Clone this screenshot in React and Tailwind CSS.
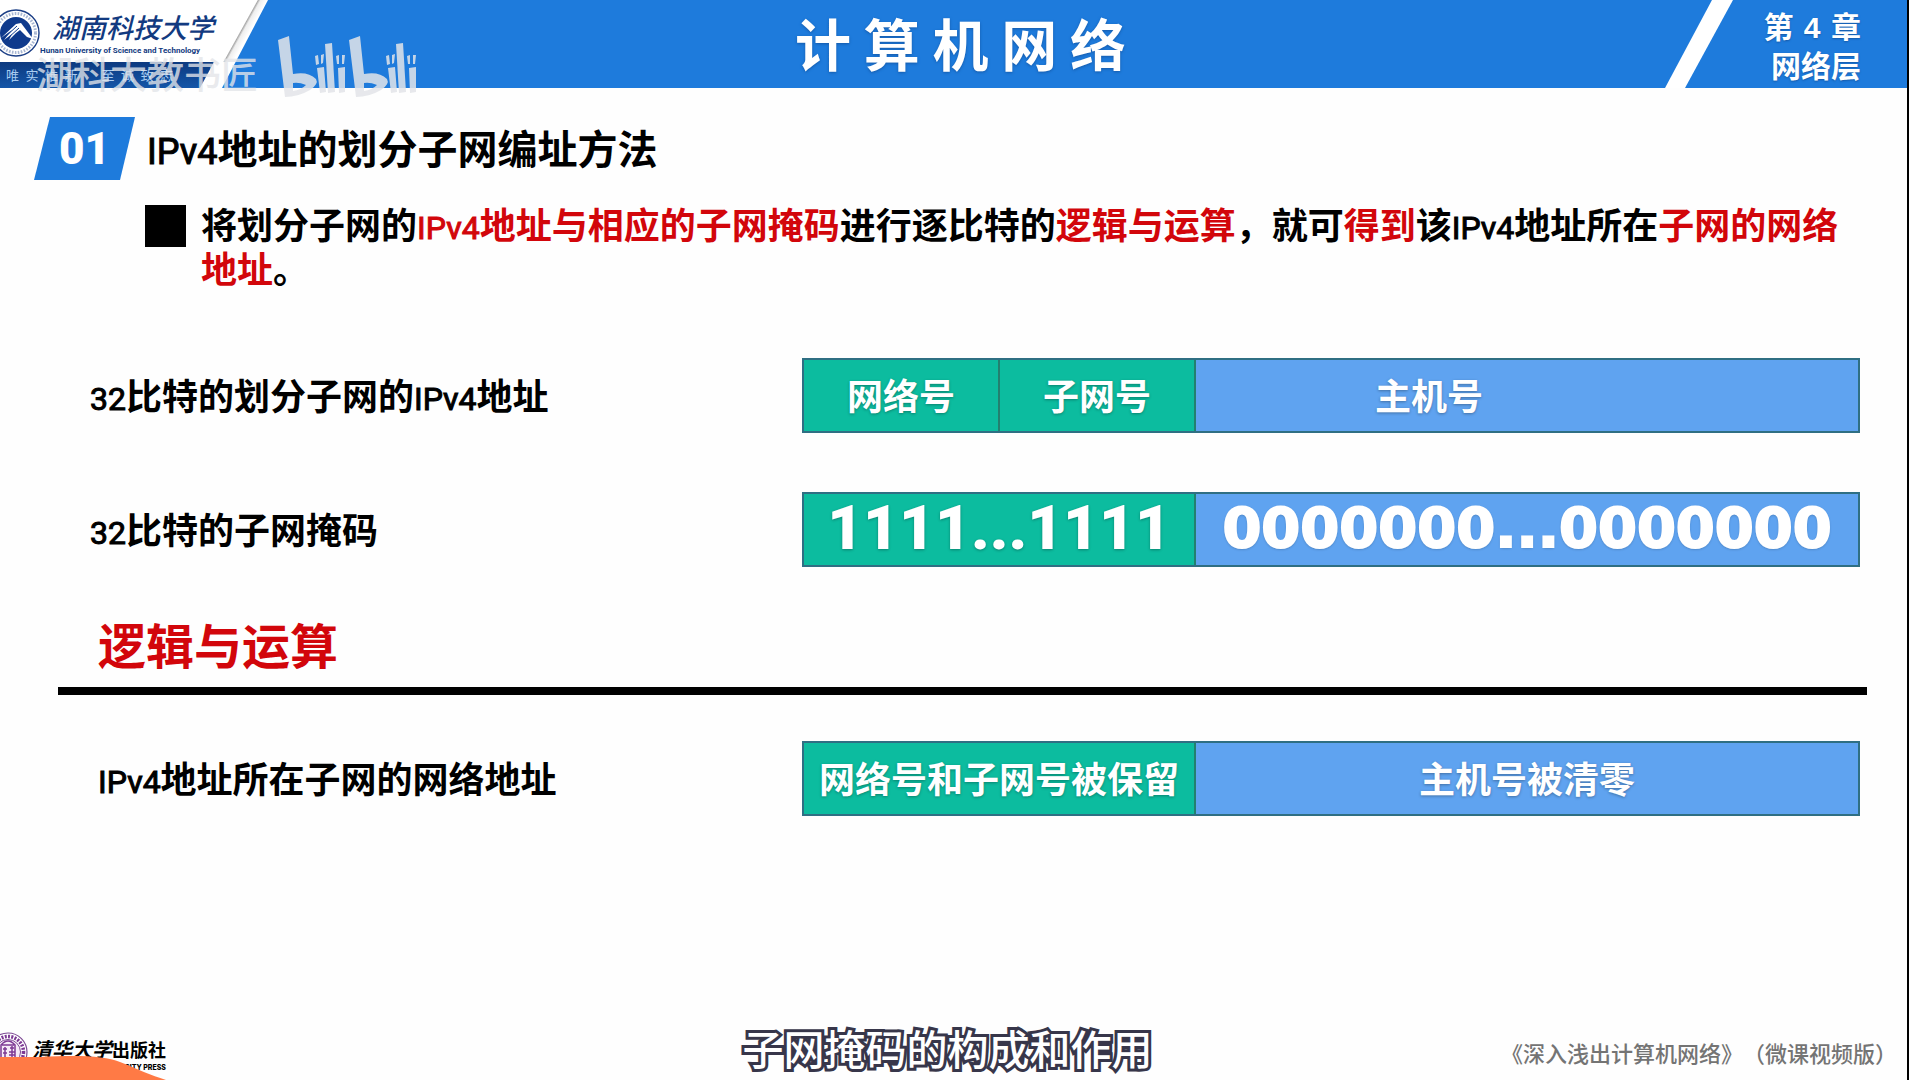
function UniversityEmblem() {
  return (
    <svg viewBox="0 0 48 48" className="-ml-2 h-12 w-12 shrink-0" aria-hidden="true">
      <circle cx="24" cy="24" r="23" fill="#fff" stroke="#1c3f86" strokeWidth="1.4" />
      <circle cx="24" cy="24" r="19.5" fill="none" stroke="#3f5f9d" strokeWidth="3" strokeDasharray="1.6 1.4" opacity=".45" />
      <circle cx="24" cy="24" r="16" fill="#0f3a8c" />
      <path d="M9 29 L24 15 L29 14 L41 30 L35 28 L28 21 L24 24 L17 31 L20 25 L12 31 L20 21 Z" fill="#fff" />
      <path d="M12 29 L25 17 M16 29 L27 19" stroke="#0f3a8c" strokeWidth="1" />
    </svg>
  );
}

function PressEmblem() {
  return (
    <svg viewBox="0 0 40 40" className="-ml-3 h-10 w-10 shrink-0" aria-hidden="true">
      <circle cx="20" cy="20" r="19" fill="#fff" stroke="#7d4a94" strokeWidth="1.2" />
      <circle cx="20" cy="20" r="15.5" fill="none" stroke="#7d3a94" strokeWidth="3.6" strokeDasharray="2 1.3" />
      <circle cx="20" cy="20" r="12.5" fill="#f5eaf7" stroke="#7d4a94" strokeWidth="1" />
      <path d="M13 28 V13 Q20 5 27 13 V28 M14 13 H26 M15 17 H19 M17 15 V25 M15 21 H19 M22 16 H26 M24 14 V26 M21 20 H27 M21 23 H27" fill="none" stroke="#7d3a94" strokeWidth="1.5" />
    </svg>
  );
}

function BilibiliLogo() {
  const half = (
    <g>
      <path d="M0 4 L11 0 L15 38 Q30 35 38 43 Q41 48 32 54 Q20 61 7 61 Z M15 47 L15 55 Q23 54 28 49 Q21 46 15 47 Z" fillRule="evenodd" />
      <path d="M39 32 L46 31 L48 56 L42 57 Z M37 20 L40 19 L41 28 L38 29 Z M43 19 L46 18 L45 27 L43 28 Z" />
      <path d="M47 8 L54 7 L57 56 L50 57 Z" />
      <path d="M60 32 L67 31 L67 56 L61 57 Z M58 20 L61 19 L61 28 L59 28 Z M64 19 L67 19 L66 28 L64 28 Z" />
    </g>
  );
  return (
    <svg viewBox="0 0 140 62" className="h-[62px] w-[140px]" fill="#e3e5e9" role="img" aria-label="bilibili">
      {half}
      <g transform="translate(71 0)">{half}</g>
    </svg>
  );
}

function Header() {
  return (
    <header className="relative grid h-[88px] grid-cols-[268px_1fr_242px] bg-[#1e7bdc]">
      <div className="flex flex-col bg-white [clip-path:polygon(0_0,100%_0,222px_100%,0_100%)]">
        <div className="flex h-[62px] items-center bg-[linear-gradient(119deg,transparent_225px,#aaa_226px,#eee_228px,transparent_234px)] pt-1">
          <UniversityEmblem />
          <div className="flex flex-col text-[#123a80]">
            <span className="pl-3 text-[27px] leading-[36px] font-medium italic">湖南科技大学</span>
            <span className="font-['Roboto',sans-serif] text-[8px] leading-3 font-bold whitespace-nowrap">
              Hunan University of Science and Technology
            </span>
          </div>
        </div>
        <div className="flex h-[26px] w-[214px] items-center gap-6 bg-linear-to-b from-[#0d3a80] to-[#1456a8] pl-1.5 text-[13px] text-[#a9cdf2] [clip-path:polygon(0_0,100%_0,200px_100%,0_100%)]">
          <span>唯&ensp;实&ensp;惟&ensp;新</span>
          <span>至&ensp;诚&ensp;致&ensp;志</span>
        </div>
      </div>
      <h1 className="flex items-center justify-center pr-3 pb-1 text-[56px] leading-[72px] font-bold text-white [text-shadow:0_1px_3px_#1559a8]">
        计 算 机 网 络
      </h1>
      <div className="flex">
        <div className="w-[68px] shrink-0 bg-white [clip-path:polygon(47px_0,100%_0,20px_100%,0_100%)]" />
        <div className="flex flex-1 flex-col items-end justify-center pt-1 pr-[46px] text-[30px] leading-[37px] font-bold text-white [text-shadow:0_1px_2px_#1559a8]">
          <span className="font-['DejaVu_Sans','Noto_Sans_CJK_SC',sans-serif]">
            第 <span className="font-['Liberation_Sans',sans-serif]">4</span> 章
          </span>
          <span>网络层</span>
        </div>
      </div>
      <div className="absolute top-[36px] left-9 flex items-start gap-5">
        <span className="pt-3 text-[37px] leading-[50px] font-medium text-[#e3e5e9]/80">湖科大教书匠</span>
        <div className="opacity-85">
          <BilibiliLogo />
        </div>
      </div>
    </header>
  );
}

function Bar({ children }) {
  return (
    <div className="flex h-[75px] border-2 border-[#2f6f83] text-[36px] leading-[44px] font-bold text-white [text-shadow:0_1px_3px_#00000050]">
      {children}
    </div>
  );
}

function Green({ children, half }) {
  return (
    <div className={(half ? "basis-[18.6%]" : "basis-[37.2%]") + " flex shrink-0 items-center justify-center border-r-2 border-[#23806f] bg-[#0cbc9f] pb-1 whitespace-nowrap"}>
      {children}
    </div>
  );
}

function Blue({ children, shifted }) {
  return (
    <div className={(shifted ? "pr-[196px] " : "") + "flex flex-1 items-center justify-center bg-[#5fa3f0] pb-1 whitespace-nowrap"}>
      {children}
    </div>
  );
}

function Row({ label, className, children }) {
  return (
    <div className={"grid grid-cols-[712fr_1058fr] items-center " + className}>
      <div className="pb-1 text-[36px] leading-[44px] font-bold">{label}</div>
      {children}
    </div>
  );
}

function Red({ children }) {
  return <span className="text-[#d2060b]">{children}</span>;
}

function Latin({ children, large }) {
  return (
    <span className={(large ? "text-[36px]" : "text-[32px]") + " leading-none font-['Roboto',sans-serif] font-normal [-webkit-text-stroke:1px_currentColor]"}>
      {children}
    </span>
  );
}

export default function App() {
  return (
    <div className="relative flex min-h-screen flex-col overflow-hidden border-r-2 border-black bg-[#fefefe] font-['Noto_Sans_CJK_SC',sans-serif] text-black">
      <Header />
      <main className="flex-1">
        <div className="flex items-center gap-3 pt-[29px] pl-[34px]">
          <div className="flex h-[63px] w-[101px] items-center justify-center bg-[#1e7bdc] font-['Roboto',sans-serif] text-[44px] leading-none font-black text-white [clip-path:polygon(16px_0,100%_0,86px_100%,0_100%)]">
            01
          </div>
          <h2 className="pb-1 text-[40px] leading-[56px] font-bold">
            <Latin large>IPv4</Latin>地址的划分子网编址方法
          </h2>
        </div>
        <div className="mt-[21px] flex gap-[15px] pr-[60px] pl-[145px]">
          <div className="mt-1 h-[42px] w-[41px] shrink-0 bg-black" />
          <p className="text-[36px] leading-[44px] font-bold">
            将划分子网的
            <Red><Latin>IPv4</Latin>地址与相应的子网掩码</Red>
            进行逐比特的<Red>逻辑与运算</Red>，就可<Red>得到</Red>该<Latin>IPv4</Latin>地址所在<Red>子网的网络地址</Red>。
          </p>
        </div>
        <Row className="mt-[69px] pr-[47px] pl-[90px]" label={<><Latin>32</Latin>比特的划分子网的<Latin>IPv4</Latin>地址</>}>
          <Bar>
            <Green half>网络号</Green>
            <Green half>子网号</Green>
            <Blue shifted>主机号</Blue>
          </Bar>
        </Row>
        <Row className="mt-[59px] pr-[47px] pl-[90px]" label={<><Latin>32</Latin>比特的子网掩码</>}>
          <Bar>
            <Green><span className="font-['Roboto',sans-serif] text-[62px] leading-[60px] font-black">1111...1111</span></Green>
            <Blue><span className="font-['DejaVu_Sans',sans-serif] text-[56px] leading-[60px] font-bold [-webkit-text-stroke:2px_currentColor]">0000000...0000000</span></Blue>
          </Bar>
        </Row>
        <div className="mt-[44px] mr-10 ml-[58px] border-b-8 border-black pb-3 pl-10 text-[48px] leading-[64px] font-bold">
          <Red>逻辑与运算</Red>
        </div>
        <Row className="mt-[46px] pr-[47px] pl-[90px]" label={<div className="pl-2"><Latin>IPv4</Latin>地址所在子网的网络地址</div>}>
          <Bar>
            <Green>网络号和子网号被保留</Green>
            <Blue>主机号被清零</Blue>
          </Bar>
        </Row>
      </main>
      <footer className="relative grid h-[56px] grid-cols-[1fr_auto_1fr] items-start">
        <div className="flex items-start pt-2">
          <PressEmblem />
          <div className="flex flex-col pt-0.5 pl-1">
            <span className="flex items-baseline">
              <span className="text-[20px] leading-[30px] font-bold italic">清华大学</span>
              <span className="text-[18px] leading-[30px] font-bold">出版社</span>
            </span>
            <span className="text-right font-['Inter',sans-serif] text-[7px] leading-[8px] font-extrabold">UNIVERSITY PRESS</span>
          </div>
        </div>
        <p className="pr-3 text-[41px] leading-[46px] font-medium text-white [-webkit-text-stroke:6px_#37364a] [paint-order:stroke_fill]">
          子网掩码的构成和作用
        </p>
        <p className="pt-3 pr-2.5 text-right text-[22px] leading-[32px] font-medium text-[#747474] [text-spacing-trim:space-all]">《深入浅出计算机网络》（微课视频版）</p>
        <svg viewBox="0 0 166 24" className="absolute bottom-0 left-0 h-6 w-[166px]" aria-hidden="true">
          <path d="M0 1 H40 C80 -1 105 0 120 6 C140 14 150 19 166 24 H0 Z" fill="#ff7a45" />
        </svg>
      </footer>
    </div>
  );
}
